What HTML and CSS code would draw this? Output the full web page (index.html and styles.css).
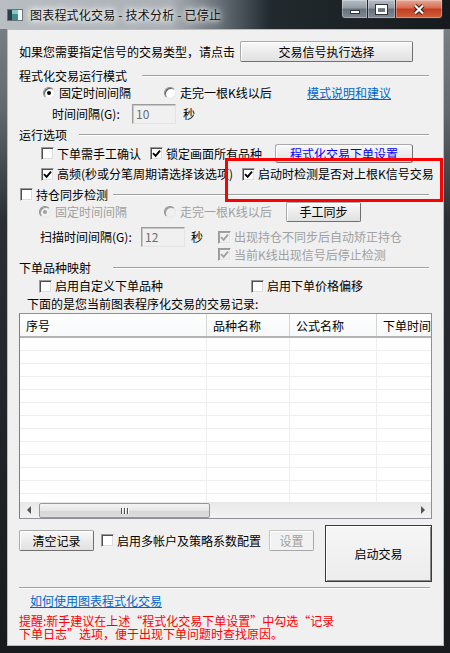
FILE: index.html
```html
<!DOCTYPE html>
<html lang="zh-CN">
<head>
    <meta charset="UTF-8">
    <meta name="viewport" content="width=device-width, initial-scale=1.0">
    <title>图表程式化交易 - 技术分析 - 已停止</title>
    <link rel="stylesheet" href="styles.css">
</head>
<body>
    <div class="window">
        <!-- Title bar -->
        <div class="titlebar">
            <svg class="app-icon" width="16" height="12" viewBox="0 0 16 12">
                <rect x="0.5" y="0.5" width="15" height="11" fill="#f4f6f8" stroke="#6b7178"/>
                <rect x="1" y="1" width="4" height="10" fill="#2c3e4c"/>
                <rect x="5" y="1" width="6" height="10" fill="#3d8f86"/>
                <rect x="5" y="1" width="6" height="4" fill="#86c9c2"/>
            </svg>
            <span class="title">图表程式化交易 - 技术分析 - 已停止</span>
            <div class="caption">
                <span class="cap cap-min"><i class="glyph-min"></i></span>
                <span class="cap cap-max"><i class="glyph-max"></i></span>
                <span class="cap cap-close">
                    <svg width="12" height="11" viewBox="0 0 12 11">
                        <path d="M2 1.5l8 8M10 1.5l-8 8" stroke="#3b1409" stroke-width="4" fill="none"/>
                        <path d="M2 1.5l8 8M10 1.5l-8 8" stroke="#fff" stroke-width="2.2" fill="none"/>
                    </svg>
                </span>
            </div>
        </div>

        <div class="client">
            <div class="row r-top">
                <span class="w-top">如果您需要指定信号的交易类型，请点击</span>
                <button class="btn btn-signal">交易信号执行选择</button>
            </div>

            <!-- 运行模式 -->
            <div class="group g-mode">
                <span class="legend w-mode">程式化交易运行模式</span><span class="etch"></span>
            </div>
            <div class="row r-mode">
                <label class="opt w121"><span class="radio on"></span>固定时间间隔</label>
                <label class="opt w143"><span class="radio"></span>走完一根K线以后</label>
                <a class="link" href="#">模式说明和建议</a>
            </div>
            <div class="row r-interval">
                <span class="w80">时间间隔(G):</span>
                <span class="edit">10</span>
                <span class="unit u7">秒</span>
            </div>

            <!-- 运行选项 -->
            <div class="group g-run">
                <span class="legend w-run">运行选项</span><span class="etch"></span>
            </div>
            <div class="row r-run1">
                <label class="opt w109"><span class="chk"></span>下单需手工确认</label>
                <label class="opt w125"><span class="chk"><svg viewBox="0 0 9 9"><path d="M1 4.2l2.6 2.6L8 1.6"/></svg></span>锁定画面所有品种</label>
                <button class="btn btn-order">程式化交易下单设置</button>
            </div>
            <div class="row r-run2">
                <label class="opt w201"><span class="chk"><svg viewBox="0 0 9 9"><path d="M1 4.2l2.6 2.6L8 1.6"/></svg></span>高频(秒或分笔周期请选择该选项)</label>
                <label class="opt"><span class="chk"><svg viewBox="0 0 9 9"><path d="M1 4.2l2.6 2.6L8 1.6"/></svg></span>启动时检测是否对上根K信号交易</label>
            </div>

            <!-- 持仓同步检测 -->
            <div class="group g-sync">
                <label class="opt w93"><span class="chk"></span>持仓同步检测</label><span class="etch"></span>
            </div>
            <div class="row r-sync">
                <label class="opt off w125"><span class="radio on"></span>固定时间间隔</label>
                <label class="opt off w122"><span class="radio"></span>走完一根K线以后</label>
                <button class="btn btn-sync">手工同步</button>
            </div>
            <div class="row r-scan">
                <span class="w101">扫描时间间隔(G):</span>
                <span class="edit">12</span>
                <span class="unit u6">秒</span>
                <label class="opt off m15"><span class="chk"><svg viewBox="0 0 9 9"><path d="M1 4.2l2.6 2.6L8 1.6"/></svg></span>出现持仓不同步后自动矫正持仓</label>
            </div>
            <div class="row r-stop">
                <label class="opt off"><span class="chk"><svg viewBox="0 0 9 9"><path d="M1 4.2l2.6 2.6L8 1.6"/></svg></span>当前K线出现信号后停止检测</label>
            </div>

            <!-- 下单品种映射 -->
            <div class="group g-map">
                <span class="legend w-map">下单品种映射</span><span class="etch"></span>
            </div>
            <div class="row r-map">
                <label class="opt w212"><span class="chk"></span>启用自定义下单品种</label>
                <label class="opt"><span class="chk"></span>启用下单价格偏移</label>
            </div>
            <div class="row r-note">下面的是您当前图表程序化交易的交易记录:</div>

            <!-- 交易记录 -->
            <div class="list">
                <div class="list-head">
                    <span class="col c1">序号</span>
                    <span class="col c2">品种名称</span>
                    <span class="col c3">公式名称</span>
                    <span class="col c4">下单时间</span>
                </div>
                <div class="list-body">
                    <span class="col c1"></span>
                    <span class="col c2"></span>
                    <span class="col c3"></span>
                    <span class="col c4"></span>
                </div>
                <div class="hscroll">
                    <span class="sb-arrow sb-left"><i></i></span>
                    <span class="sb-thumb"><i></i><i></i><i></i></span>
                    <span class="sb-track"></span>
                    <span class="sb-arrow sb-right"><i></i></span>
                </div>
            </div>

            <div class="bottom">
                <button class="btn btn-clear">清空记录</button>
                <label class="opt w168"><span class="chk"></span>启用多帐户及策略系数配置</label>
                <button class="btn btn-set" disabled>设置</button>
                <button class="btn btn-start">启动交易</button>
            </div>

            <div class="sep"></div>

            <div class="help"><a class="link" href="#">如何使用图表程式化交易</a></div>
            <p class="tip">提醒:新手建议在上述“程式化交易下单设置”中勾选“记录<br>下单日志”选项，便于出现下单问题时查找原因。</p>
        </div>

        <!-- red marker drawn over the options -->
        <div class="highlight"></div>
    </div>
</body>
</html>
```

FILE: styles.css
```css
* {
    box-sizing: border-box;
}

body {
    margin: 0;
    background-color: #101214;
    font-family: "Noto Sans CJK SC", "Noto Sans", sans-serif;
    font-size: 12px;
    line-height: 14px;
    color: #000;
    overflow: hidden;
}

.window {
    position: relative;
    width: 450px;
    height: 653px;
    display: flex;
    flex-direction: column;
    background: linear-gradient(180deg, #80858a 0, #62686d 110px, #2b2f33 220px, #181a1d 100%);
}

/* Title bar */
.titlebar {
    height: 29px;
    flex-shrink: 0;
    display: flex;
    align-items: center;
    padding-left: 7px;
    background: linear-gradient(90deg, #b9bec2 0, #a9afb4 38%, #59626a 51%, #212a2e 60%, #161a1d 100%);
}

.app-icon {
    display: block;
}

.title {
    margin-left: 7px;
    letter-spacing: 0.2px;
    color: #111;
    text-shadow: 0 0 5px #fff, 0 0 9px #fff, 0 0 12px rgba(255, 255, 255, 0.8);
}

.caption {
    display: flex;
    align-self: flex-start;
    margin-left: auto;
    margin-right: 7px;
}

.cap {
    height: 19px;
    display: flex;
    align-items: center;
    justify-content: center;
    border: 1px solid #22272c;
    border-top: none;
    box-shadow: inset 0 0 0 1px rgba(255, 255, 255, 0.3);
    background: linear-gradient(180deg, #b7bec5 0, #929ba4 45%, #66717b 50%, #7f8a94 100%);
}

.cap-min {
    width: 27px;
    border-radius: 0 0 0 4px;
}

.cap-max {
    width: 28px;
    border-left: none;
}

.cap-close {
    width: 47px;
    border-left: none;
    border-radius: 0 0 4px 0;
    background: linear-gradient(180deg, #e7a896 0, #d66a4f 45%, #c23e1d 50%, #d2603e 100%);
}

.glyph-min {
    width: 10px;
    height: 4px;
    margin-top: 5px;
    background: #fff;
    border: 1px solid #2e3338;
}

.glyph-max {
    width: 11px;
    height: 9px;
    border: 2px solid #fff;
    border-top-width: 3px;
    outline: 1px solid #2e3338;
}

/* Client area */
.client {
    height: 617px;
    margin: 0 6px 0 7px;
    padding: 0 11px;
    display: flex;
    flex-direction: column;
    background-color: #f0f0f0;
    border: 1px solid #b9bdc1;
}

.client > * {
    flex-shrink: 0;
}

.row,
.group {
    display: flex;
    align-items: center;
    white-space: nowrap;
}

.legend {
    flex-shrink: 0;
}

.etch {
    flex: 1;
    height: 2px;
    margin-right: 3px;
    border-top: 1px solid #a0a0a0;
    border-bottom: 1px solid #fff;
}

.r-top { margin-top: 11px; height: 21px; }
.g-mode { margin-top: 6px; height: 15px; }
.r-mode { margin-top: 3px; height: 14px; padding-left: 24px; }
.r-interval { margin-top: 4px; height: 20px; padding-left: 33px; }
.g-run { margin-top: 4px; height: 14px; }
.r-run1 { margin-top: 2px; height: 19px; padding-left: 22px; }
.r-run2 { margin-top: 4px; height: 14px; padding-left: 22px; }
.g-sync { margin-top: 6px; height: 15px; padding-left: 1px; }
.r-sync { margin-top: 0; height: 20px; padding-left: 20px; }
.r-scan { margin-top: 5px; height: 20px; padding-left: 21px; }
.r-stop { margin-top: 1px; height: 13px; padding-left: 199px; }
.g-map { margin-top: 0; height: 13px; }
.r-map { margin-top: 5px; height: 14px; padding-left: 20px; }
.r-note { margin-top: 4px; height: 14px; padding-left: 8px; }

.w-top { width: 221px; }
.w-mode { width: 123px; }
.w-run { width: 60px; }
.w-map { width: 94px; }
.w80 { width: 80px; }
.w93 { width: 93px; }
.w101 { width: 101px; }
.w109 { width: 109px; }
.w121 { width: 121px; }
.w122 { width: 122px; }
.w125 { width: 125px; }
.w143 { width: 143px; }
.w168 { width: 168px; }
.w201 { width: 201px; }
.w212 { width: 212px; }
.m15 { margin-left: 15px; }
.u6 { margin-left: 6px; }
.u7 { margin-left: 7px; }

/* Radio / checkbox */
.opt {
    display: flex;
    align-items: center;
    flex-shrink: 0;
}

.opt.off {
    color: #a0a0a0;
}

.radio {
    position: relative;
    width: 12px;
    height: 12px;
    margin-right: 4px;
    border-radius: 50%;
    background: #fff;
    border: 1px solid;
    border-color: #8a8a8a #e8e8e8 #e8e8e8 #8a8a8a;
    box-shadow: inset 1px 1px 0 #5a5a5a;
}

.radio.on::after {
    content: "";
    position: absolute;
    left: 3px;
    top: 3px;
    width: 4px;
    height: 4px;
    border-radius: 50%;
    background: #000;
}

.off .radio {
    background: #f0f0f0;
    box-shadow: inset 1px 1px 0 #a0a0a0;
}

.off .radio.on::after {
    background: #a0a0a0;
}

.chk {
    width: 13px;
    height: 13px;
    margin-right: 3px;
    display: flex;
    align-items: center;
    justify-content: center;
    background: #fff;
    border: 1px solid;
    border-color: #9a9a9a #f4f4f4 #f4f4f4 #9a9a9a;
    box-shadow: inset 1px 1px 0 #4e4e4e, inset -1px -1px 0 #dcdcdc;
}

.chk svg {
    width: 9px;
    height: 9px;
    fill: none;
    stroke: #000;
    stroke-width: 1.9;
}

.off .chk {
    background: #f0f0f0;
    box-shadow: inset 1px 1px 0 #a0a0a0, inset -1px -1px 0 #e3e3e3;
}

.off .chk svg {
    stroke: #a0a0a0;
}

.edit {
    width: 44px;
    height: 20px;
    padding: 2px 0 0 3px;
    color: #6d6d6d;
    background: #f0f0f0;
    border: 1px solid;
    border-color: #9c9c9c #e3e3e3 #e3e3e3 #9c9c9c;
    box-shadow: inset 1px 1px 0 #c8c8c8;
}

.link {
    color: #0066cc;
    text-decoration: underline;
}

/* Buttons */
.btn {
    font: inherit;
    color: #000;
    padding: 0;
    flex-shrink: 0;
    border: 1px solid;
    border-color: #a9a9a9 #6f6f6f #6f6f6f #a9a9a9;
    border-radius: 2px;
    background: linear-gradient(180deg, #f8f8f8 0, #ececec 50%, #e1e1e1 100%);
    box-shadow: inset 1px 1px 0 #fff;
}

.btn-signal { width: 173px; height: 21px; }
.btn-order { width: 138px; height: 19px; color: #0000ff; border-radius: 3px; }
.btn-sync { width: 75px; height: 20px; }
.btn-clear { width: 75px; height: 21px; margin-top: 5px; }

.btn-set {
    width: 45px;
    height: 21px;
    margin-top: 5px;
    color: #a0a0a0;
    border-color: #c4c4c4 #a8a8a8 #a8a8a8 #c4c4c4;
    background: #f2f2f2;
}

.btn-start {
    width: 107px;
    height: 57px;
    margin-left: auto;
    border: 1px solid #3a3a3a;
    border-radius: 0;
    background: linear-gradient(180deg, #f6f6f6 0, #ececec 100%);
    box-shadow: inset 1px 1px 0 #fff, inset -1px -1px 0 #8a8a8a;
}

/* Record list */
.list {
    margin-top: 2px;
    height: 206px;
    display: flex;
    flex-direction: column;
    background: #fff;
    border: 1px solid #8d9197;
    border-left-color: #7a7e84;
    overflow: hidden;
}

.list-head {
    display: flex;
    height: 24px;
    flex-shrink: 0;
    background: linear-gradient(180deg, #ffffff 0, #f7f8f9 100%);
    border-bottom: 2px solid #b4b4b4;
}

.list-body {
    display: flex;
    flex: 1;
    background: repeating-linear-gradient(180deg, #fff 0, #fff 12px, #eeeeee 12px, #eeeeee 13px);
}

.col {
    flex-shrink: 0;
    border-right: 1px solid #efefef;
    white-space: nowrap;
    overflow: hidden;
}

.list-head .col {
    padding: 5px 0 0 6px;
    border-right-color: #d5d5d5;
}

.c1 { width: 187px; }
.c2 { width: 83px; }
.c3 { width: 87px; }
.c4 { width: 80px; }

.hscroll {
    display: flex;
    height: 16px;
    flex-shrink: 0;
    background: linear-gradient(180deg, #e8e8e8 0, #f3f3f3 100%);
}

.sb-arrow {
    width: 17px;
    display: flex;
    align-items: center;
    justify-content: center;
}

.sb-arrow i {
    width: 0;
    height: 0;
    border-top: 4px solid transparent;
    border-bottom: 4px solid transparent;
}

.sb-left i {
    border-right: 4px solid #555;
}

.sb-right i {
    border-left: 4px solid #555;
}

.sb-thumb {
    width: 171px;
    height: 15px;
    margin: 1px 0 0 2px;
    display: flex;
    align-items: center;
    justify-content: center;
    gap: 1px;
    border: 1px solid #979797;
    border-radius: 2px;
    background: linear-gradient(180deg, #f4f4f4 0, #e6e6e6 50%, #d6d6d6 51%, #dddddd 100%);
}

.sb-thumb i {
    width: 1px;
    height: 6px;
    background: #4f4f4f;
    box-shadow: 1px 0 0 #fff;
    margin-right: 1px;
}

.sb-track {
    flex: 1;
}

/* Bottom area */
.bottom {
    margin-top: 6px;
    height: 57px;
    display: flex;
    align-items: flex-start;
}

.bottom .opt {
    margin-left: 7px;
    margin-top: 5px;
    height: 21px;
}

.sep {
    margin-top: 5px;
    margin-right: 2px;
    height: 2px;
    border-top: 1px solid #a0a0a0;
    border-bottom: 1px solid #fff;
}

.help {
    margin-top: 5px;
    height: 14px;
    padding-left: 11px;
}

.tip {
    margin: 6px 0 0;
    line-height: 13px;
    color: #ff0000;
    white-space: nowrap;
}

.highlight {
    position: absolute;
    left: 225px;
    top: 158px;
    width: 218px;
    height: 44px;
    border: 3px solid #ff0000;
}
```
